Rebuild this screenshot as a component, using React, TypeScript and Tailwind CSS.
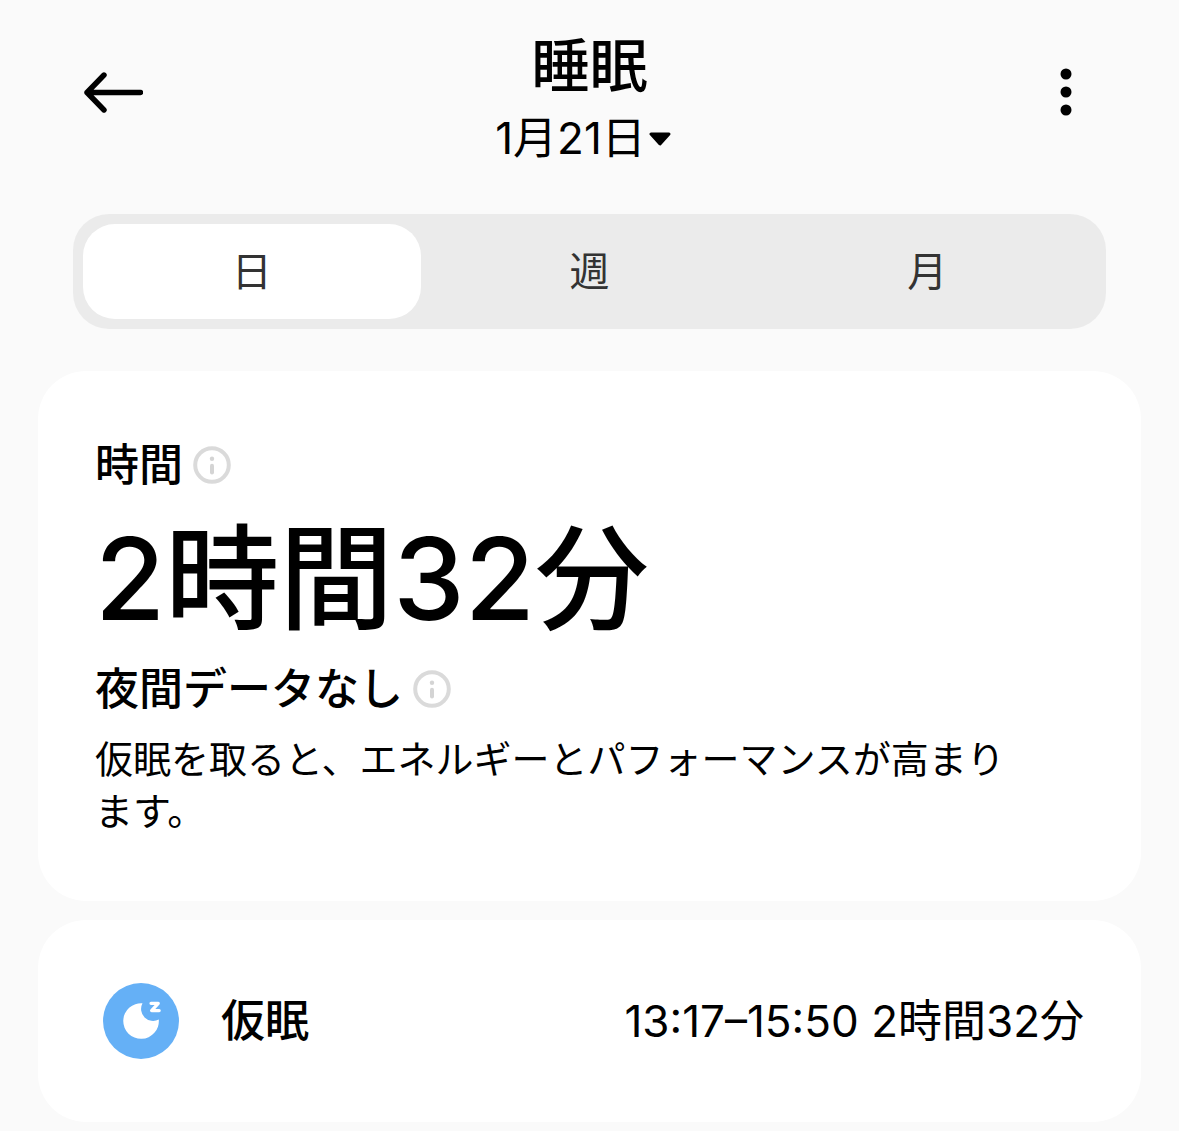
import { ReactNode, useState } from "react";

const tabs = ["日", "週", "月"];

function InfoIcon() {
  return (
    <svg viewBox="0 0 38 38" className="size-[38px]" fill="none" aria-hidden="true">
      <circle cx="19" cy="19" r="16.8" stroke="#dadada" strokeWidth="4" />
      <circle cx="19" cy="12.8" r="2.2" fill="#d4d4d4" />
      <path d="M19 19.8v6.6" stroke="#d4d4d4" strokeWidth="4" strokeLinecap="round" />
    </svg>
  );
}

function NapIcon() {
  return (
    <svg viewBox="0 0 76 76" className="size-[76px] shrink-0" aria-hidden="true">
      <circle cx="38" cy="38" r="38" fill="#65b0f6" />
      <path
        d="M39.5 20.3A17.8 17.8 0 1 0 55.8 36.5A12 12 0 0 1 39.5 20.3Z"
        fill="#fff"
      />
      <path
        d="M48 20.3H55.3L48.6 27.6H56.2"
        fill="none"
        stroke="#fff"
        strokeWidth="3.2"
        strokeLinecap="round"
        strokeLinejoin="round"
      />
    </svg>
  );
}

function Card({ children }: { children: ReactNode }) {
  return <section className="rounded-[48px] bg-white px-[57px]">{children}</section>;
}

export default function App() {
  const [active, setActive] = useState("日");

  return (
    <div className="min-h-screen bg-[#fafafa] font-['Inter','Noto_Sans_CJK_JP',sans-serif] text-black">
      <header className="flex items-start justify-between px-[83px] pt-8">
        <button aria-label="戻る" className="mt-10">
          <svg viewBox="0 0 60 42" className="h-[42px] w-[60px]" fill="none" aria-hidden="true">
            <path
              d="M21 3L4 20.5L21 38M4 20.5H57.5"
              stroke="#000"
              strokeWidth="5.4"
              strokeLinecap="round"
              strokeLinejoin="round"
            />
          </svg>
        </button>
        <div className="flex flex-col items-center">
          <h1 className="text-[58px] leading-[68px] font-medium">睡眠</h1>
          <button className="flex items-center gap-[2px] pr-3 text-[44px] leading-[76px]">
            1月21日
            <svg viewBox="0 0 24 16" className="h-4 w-6" aria-hidden="true">
              <path
                d="M3 4h18L12 14z"
                stroke="#000"
                strokeWidth="3"
                strokeLinejoin="round"
              />
            </svg>
          </button>
        </div>
        <button aria-label="メニュー" className="mt-9 flex w-[60px] justify-center">
          <svg viewBox="0 0 12 48" className="h-12 w-3" aria-hidden="true">
            <circle cx="6" cy="6" r="5.5" />
            <circle cx="6" cy="24" r="5.5" />
            <circle cx="6" cy="42" r="5.5" />
          </svg>
        </button>
      </header>

      <nav className="mx-[73px] mt-[38px] flex rounded-[36px] bg-[#ebebeb] p-[10px]">
        {tabs.map((tab) => (
          <button
            key={tab}
            aria-pressed={tab === active}
            onClick={() => setActive(tab)}
            className={`h-[95px] flex-1 rounded-[32px] text-[40px] text-[#333] ${
              tab === active ? "bg-white" : ""
            }`}
          >
            {tab}
          </button>
        ))}
      </nav>

      <main className="mt-[42px] flex flex-col gap-[19px] px-[38px] pb-[9px]">
        <Card>
          <div className="py-16">
            <h2 className="flex items-center gap-[10px] text-[44px] leading-[60px] font-medium">
              時間
              <InfoIcon />
            </h2>
            <p className="mt-1 text-[114px] leading-[160px] font-medium">2時間32分</p>
            <h3 className="flex items-center gap-[10px] text-[44px] leading-[60px] font-medium">
              夜間データなし
              <InfoIcon />
            </h3>
            <p className="mt-[14px] max-w-[920px] text-[38px] leading-[52px]">
              仮眠を取ると、エネルギーとパフォーマンスが高まります。
            </p>
          </div>
        </Card>
        <Card>
          <div className="flex h-[202px] items-center pl-2">
            <NapIcon />
            <h3 className="ml-[42px] text-[44px] font-medium">仮眠</h3>
            <p className="ml-auto text-[44px]">13:17–15:50 2時間32分</p>
          </div>
        </Card>
      </main>
    </div>
  );
}
